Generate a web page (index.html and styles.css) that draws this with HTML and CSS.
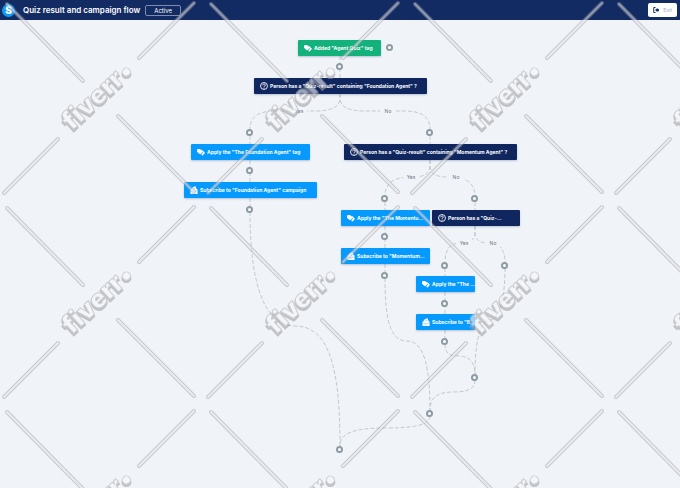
FILE: index.html
```html
<!DOCTYPE html>
<html lang="en">
<head>
  <meta charset="UTF-8">
  <meta name="viewport" content="width=device-width, initial-scale=1.0">
  <title>Quiz result and campaign flow</title>
  <link rel="stylesheet" href="styles.css">
</head>
<body>
  <!-- shared icons -->
  <svg class="sprite" aria-hidden="true">
    <symbol id="tag" viewBox="0 0 18 16">
      <path d="M0 3 2 1 7 1.500 12 7.500 8.500 13 5 12 0 7.500Z"/>
      <path d="M8.500 3 11.500 3.500 18 9.500 13 16 9.500 15 13 9Z"/>
    </symbol>
    <symbol id="mail" viewBox="0 0 18 18">
      <path d="M1 8.500 4 6.500V4.500L12 0l2 5 3 3.500V18H1Z"/>
      <path class="mark" d="M3 10.500 9 14l6-3.500M7 7l4-1.500"/>
    </symbol>
    <symbol id="ask" viewBox="0 0 18 18">
      <circle class="ring" cx="9" cy="9" r="7.800"/>
      <path class="ring" d="M6 7.500C6 3.500 12.300 4 12 7.200 11.800 9 9 9 9 11"/>
      <circle cx="9" cy="13.500" r="1.300"/>
    </symbol>
  </svg>

  <header class="topbar">
    <span class="logo">S</span>
    <h1>Quiz result and campaign flow</h1>
    <span class="status">Active</span>
    <button class="exit" type="button">
      <svg viewBox="0 0 14 12" aria-hidden="true">
        <path class="door" d="M5 1H1.500v10H5"/>
        <path d="M4.500 5H7V3l5 3-5 3V7H4.500Z"/>
        <circle cx="9" cy="6" r="3"/>
      </svg>
      Exit
    </button>
  </header>

  <main>
    <div class="flow">
      <svg class="edges" viewBox="0 0 360 440" aria-hidden="true">
        <path d="M180 36V58"/>
        <path d="M180 74V78Q180 91 155 91H115Q90 91 90 109"/>
        <path d="M180 74V78Q180 91 205 91H245Q270 91 270 109"/>
        <path d="M270 116V124M90 116V124M90 140V162M90 178V186"/>
        <path d="M270 140V144C270 156 262 157 250 157C233 157 225 164 225 176"/>
        <path d="M270 140V144C270 156 278 157 290 157C307 157 315 164 315 176"/>
        <path d="M225 182V190M315 182V190M225 206V228M225 244V252"/>
        <path d="M315 206V210C315 222 309 223 300 223C290 223 285 230 285 242"/>
        <path d="M315 206V210C315 222 321 223 330 223C340 223 345 230 345 242"/>
        <path d="M285 248V256M285 272V294M285 310V318"/>
        <path d="M90 192C90 266 105 306 135 306C170 306 180 350 180 426"/>
        <path d="M225 258C225 300 230 321 247 321C265 321 270 350 270 390"/>
        <path d="M285 324C285 334 290 336 300 336C311 337 315 344 315 355"/>
        <path d="M345 248C345 280 339 300 330 300C319 301 315 325 315 355"/>
        <path d="M315 360C315 370 306 372 293 372C278 372 270 377 270 390"/>
        <path d="M270 396C270 406 250 408 225 408C194 408 180 413 180 426"/>
      </svg>

      <span class="label yes-1">Yes</span>
      <span class="label no-1">No</span>
      <span class="label yes-2">Yes</span>
      <span class="label no-2">No</span>
      <span class="label yes-3">Yes</span>
      <span class="label no-3">No</span>

      <button type="button" class="node trigger n-start"><svg><use href="#tag"/></svg><span>Added "Agent Quiz" tag</span></button>
      <button type="button" class="node check n-foundation"><svg><use href="#ask"/></svg><span>Person has a "Quiz-result" containing "Foundation Agent" ?</span></button>
      <button type="button" class="node n-foundation-tag"><svg><use href="#tag"/></svg><span>Apply the "The Foundation Agent" tag</span></button>
      <button type="button" class="node n-foundation-mail"><svg><use href="#mail"/></svg><span>Subscribe to "Foundation Agent" campaign</span></button>
      <button type="button" class="node check n-momentum"><svg><use href="#ask"/></svg><span>Person has a "Quiz-result" containing "Momentum Agent" ?</span></button>
      <button type="button" class="node n-momentum-tag"><svg><use href="#tag"/></svg><span>Apply the "The Momentu...</span></button>
      <button type="button" class="node check n-last"><svg><use href="#ask"/></svg><span>Person has a "Quiz-...</span></button>
      <button type="button" class="node n-momentum-mail"><svg><use href="#mail"/></svg><span>Subscribe to "Momentum...</span></button>
      <button type="button" class="node n-last-tag"><svg><use href="#tag"/></svg><span>Apply the "The ...</span></button>
      <button type="button" class="node n-last-mail"><svg><use href="#mail"/></svg><span>Subscribe to "B...</span></button>

      <button type="button" class="add a1" aria-label="Add trigger"></button>
      <button type="button" class="add a2" aria-label="Add step"></button>
      <button type="button" class="add a3" aria-label="Add step"></button>
      <button type="button" class="add a4" aria-label="Add step"></button>
      <button type="button" class="add a5" aria-label="Add step"></button>
      <button type="button" class="add a6" aria-label="Add step"></button>
      <button type="button" class="add a7" aria-label="Add step"></button>
      <button type="button" class="add a8" aria-label="Add step"></button>
      <button type="button" class="add a9" aria-label="Add step"></button>
      <button type="button" class="add a10" aria-label="Add step"></button>
      <button type="button" class="add a11" aria-label="Add step"></button>
      <button type="button" class="add a12" aria-label="Add step"></button>
      <button type="button" class="add a13" aria-label="Add step"></button>
      <button type="button" class="add a14" aria-label="Add step"></button>
      <button type="button" class="add a15" aria-label="Add step"></button>
      <button type="button" class="add a16" aria-label="Add step"></button>
      <button type="button" class="add a17" aria-label="Add step"></button>
    </div>
  </main>

  <!-- repeating watermark over the whole page -->
  <svg class="watermark" aria-hidden="true">
    <defs>
      <path id="bars" d="M7 4 83 81M118 116 194 192M4 193 58 139M139 58 194 3"/>
      <pattern id="tile" width="204" height="204" patternUnits="userSpaceOnUse">
        <use href="#bars" class="bar-edge"/>
        <use href="#bars" class="bar-fill"/>
        <g class="word-shade" transform="translate(72 133) rotate(-43)">
          <text>fiverr</text>
          <circle cx="80" cy="-6" r="4"/>
        </g>
        <g class="word" transform="translate(72 131) rotate(-43)">
          <text>fiverr</text>
          <circle cx="80" cy="-6" r="4"/>
        </g>
      </pattern>
    </defs>
    <rect width="100%" height="100%" fill="url(#tile)"/>
  </svg>
</body>
</html>
```
FILE: styles.css
```css
* {
  margin: 0;
  padding: 0;
  box-sizing: border-box;
}
body {
  min-height: 100vh;
  background: #f0f4f9;
  font-family: Inter, "Open Sans", sans-serif;
}
button {
  border: none;
  font-family: inherit;
  cursor: pointer;
}
.sprite {
  position: absolute;
  width: 0;
  height: 0;
}

/* Top bar */
.topbar {
  display: flex;
  align-items: center;
  height: 20px;
  padding: 0 3px 0 2px;
  background: #132b63;
  color: #fff;
}
.logo {
  width: 13px;
  height: 13px;
  margin-right: 8px;
  border-radius: 50%;
  background: #0f9bf5;
  font: 900 10px/13px Inter, sans-serif;
  text-align: center;
}
.topbar h1 {
  font-size: 8px;
  font-weight: 600;
}
.status {
  margin-left: 5px;
  width: 36px;
  border: 1px solid #7d8bad;
  border-radius: 2px;
  font-size: 6px;
  line-height: 9px;
  text-align: center;
}
.exit {
  display: flex;
  align-items: center;
  justify-content: center;
  gap: 3px;
  width: 29px;
  height: 14px;
  margin-left: auto;
  border-radius: 2px;
  background: #fff;
  color: #a3a9bb;
  font-size: 5px;
}
.exit svg {
  width: 7px;
  height: 6px;
  fill: #132b63;
}
.door {
  fill: none;
  stroke: #132b63;
  stroke-width: 2;
}

/* Flow canvas */
.flow {
  position: relative;
  width: 360px;
  height: 440px;
  margin: 0 auto;
}
.edges {
  display: block;
  width: 360px;
  height: 440px;
  fill: none;
  stroke: #c3c9ce;
  stroke-dasharray: 4 2;
}
.node {
  position: absolute;
  display: flex;
  align-items: center;
  gap: 2px;
  height: 16px;
  padding: 0 6px;
  border-radius: 1px;
  background: #069aff;
  box-shadow: 0 1px 2px rgba(20, 50, 100, 0.25);
  color: #fff;
  font-size: 5px;
  font-weight: 700;
  white-space: nowrap;
  overflow: hidden;
}
.node svg {
  flex: none;
  width: 8px;
  height: 8px;
  fill: #fff;
}
.trigger {
  background: #13b27c;
}
.check {
  background: #10265f;
}
.mark {
  fill: none;
  stroke: #069aff;
  stroke-width: 1;
}
.ring {
  fill: none;
  stroke: #fff;
  stroke-width: 2;
}
.n-start { left: 138px; top: 20px; width: 83px; }
.n-foundation { left: 94px; top: 58px; width: 173px; }
.n-foundation-tag { left: 31px; top: 124px; width: 119px; }
.n-foundation-mail { left: 24px; top: 162px; width: 133px; }
.n-momentum { left: 184px; top: 124px; width: 173px; }
.n-momentum-tag { left: 181px; top: 190px; width: 89px; }
.n-last { left: 272px; top: 190px; width: 88px; }
.n-momentum-mail { left: 181px; top: 228px; width: 89px; }
.n-last-tag { left: 256px; top: 256px; width: 59px; }
.n-last-mail { left: 256px; top: 294px; width: 59px; }

.label {
  position: absolute;
  width: 16px;
  background: #f0f4f9;
  color: #6c7580;
  font-size: 5px;
  line-height: 8px;
  text-align: center;
}
.yes-1 { left: 131px; top: 87px; }
.no-1 { left: 220px; top: 87px; }
.yes-2 { left: 243px; top: 153px; }
.no-2 { left: 288px; top: 153px; }
.yes-3 { left: 296px; top: 219px; }
.no-3 { left: 325px; top: 219px; }

.add {
  position: absolute;
  width: 7px;
  height: 7px;
  border: 2px solid #8d9ba5;
  border-radius: 50%;
  background: #fff;
}
.a1 { left: 226px; top: 24px; }
.a2 { left: 176px; top: 43px; }
.a3 { left: 86px; top: 109px; }
.a4 { left: 266px; top: 109px; }
.a5 { left: 86px; top: 147px; }
.a6 { left: 86px; top: 186px; }
.a7 { left: 221px; top: 175px; }
.a8 { left: 311px; top: 175px; }
.a9 { left: 221px; top: 213px; }
.a10 { left: 221px; top: 252px; }
.a11 { left: 281px; top: 242px; }
.a12 { left: 341px; top: 242px; }
.a13 { left: 281px; top: 280px; }
.a14 { left: 281px; top: 318px; }
.a15 { left: 311px; top: 354px; }
.a16 { left: 266px; top: 390px; }
.a17 { left: 176px; top: 426px; }

/* Watermark */
.watermark {
  position: absolute;
  top: 0;
  left: 0;
  width: 100%;
  height: 100%;
  opacity: 0.6;
  pointer-events: none;
}
.bar-edge,
.bar-fill {
  fill: none;
  stroke: #9c9ca0;
  stroke-width: 4;
  stroke-linecap: round;
  opacity: 0.8;
}
.bar-fill {
  stroke: #f4f4f6;
  stroke-width: 2;
}
.word,
.word-shade {
  font: 900 26px Inter, sans-serif;
  fill: #f5f6f8;
  stroke: #b4b4b8;
  stroke-width: 1;
}
.word-shade {
  fill: #a0a0a4;
  stroke: #a0a0a4;
  stroke-width: 2;
}
```
